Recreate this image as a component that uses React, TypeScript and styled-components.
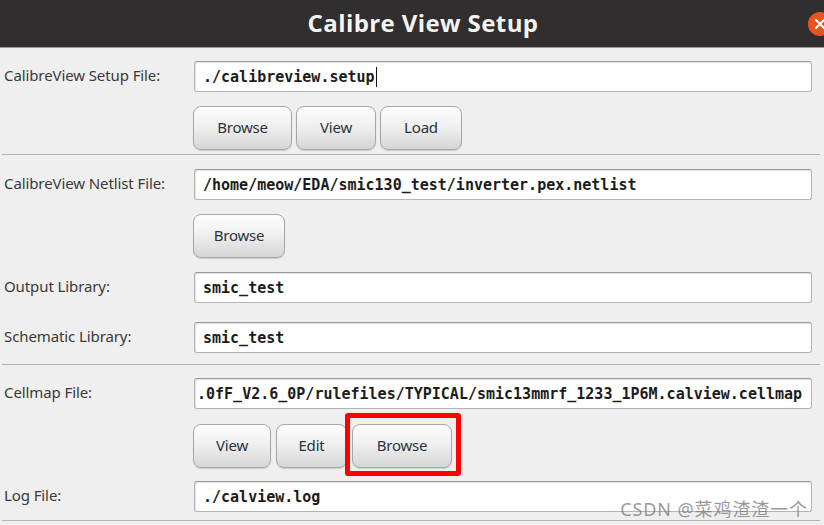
import React from 'react';
import styled, { createGlobalStyle } from 'styled-components';

const GlobalStyle = createGlobalStyle`
  html, body {
    margin: 0;
    padding: 0;
    background: #efefef;
    overflow: hidden;
  }
`;

const App = () => {
  return (
    <Window>
      <GlobalStyle />
      <TitleBar>
        <Title>Calibre View Setup</Title>
        <CloseButton>
          <svg width="24" height="24" viewBox="0 0 24 24">
            <path d="M8 8 L16 16 M16 8 L8 16" stroke="#fff" strokeWidth="2" strokeLinecap="round" />
          </svg>
        </CloseButton>
      </TitleBar>

      <Section $top={13} $bottom={4}>
        <Row>
          <Label>CalibreView Setup File:</Label>
          <Field>
            ./calibreview.setup
            <Caret />
          </Field>
        </Row>
        <Buttons $top={14}>
          <Button $width={99}>Browse</Button>
          <Button $width={80}>View</Button>
          <Button $width={82}>Load</Button>
        </Buttons>
      </Section>

      <Section $top={14} $bottom={11} $line>
        <Row>
          <Label>CalibreView Netlist File:</Label>
          <Field>/home/meow/EDA/smic130_test/inverter.pex.netlist</Field>
        </Row>
        <Buttons $top={14}>
          <Button $width={92}>Browse</Button>
        </Buttons>
        <Row $top={14}>
          <Label>Output Library:</Label>
          <Field>smic_test</Field>
        </Row>
        <Row $top={19}>
          <Label>Schematic Library:</Label>
          <Field>smic_test</Field>
        </Row>
      </Section>

      <Section $top={13} $bottom={8} $line>
        <Row>
          <Label>Cellmap File:</Label>
          <Field $scrolled>.0fF_V2.6_0P/rulefiles/TYPICAL/smic13mmrf_1233_1P6M.calview.cellmap</Field>
        </Row>
        <Buttons $top={15} $gap={5}>
          <Button $width={78}>View</Button>
          <Button $width={71}>Edit</Button>
          <Button $width={100} $marked>Browse</Button>
        </Buttons>
        <Row $top={13}>
          <Label>Log File:</Label>
          <Field>./calview.log</Field>
        </Row>
      </Section>
      <Divider />

      <Watermark>CSDN @菜鸡渣渣一个</Watermark>
    </Window>
  );
};

export default App;

const Window = styled.div`
  position: relative;
  width: 824px;
  height: 525px;
  background: #efefef;
  overflow: hidden;
`;

const TitleBar = styled.div`
  position: relative;
  height: 47px;
  background: #302e2e;
  border-bottom: 1px solid #9c9a98;
  display: flex;
  align-items: center;
  justify-content: center;
  padding-left: 22px;
`;

const Title = styled.div`
  font-family: 'Open Sans', 'Noto Sans', sans-serif;
  font-weight: 700;
  font-size: 24px;
  letter-spacing: 0.4px;
  color: #f4f4f4;
  margin-top: -3px;
`;

const CloseButton = styled.div`
  position: absolute;
  right: -8px;
  top: 12px;
  width: 24px;
  height: 24px;
  border-radius: 50%;
  background: #e95420;
  svg {
    display: block;
  }
`;

const Section = styled.div<{ $top: number; $bottom: number; $line?: boolean }>`
  padding: ${(p) => p.$top}px 0 ${(p) => p.$bottom}px;
  border-top: ${(p) => (p.$line ? '1px solid #b2b2b2' : 'none')};
  margin: 0 4px 0 2px;
`;

const Divider = styled.div`
  height: 1px;
  background: #b2b2b2;
  margin: 0 4px 0 2px;
`;

const Row = styled.div<{ $top?: number }>`
  display: grid;
  grid-template-columns: 192px 618px;
  align-items: center;
  margin-top: ${(p) => p.$top || 0}px;
`;

const Label = styled.div`
  font-family: 'Noto Sans', 'Open Sans', sans-serif;
  font-size: 15px;
  letter-spacing: -0.1px;
  color: #3a3a3a;
  padding-left: 2px;
  margin-top: -3px;
`;

const Field = styled.div<{ $scrolled?: boolean }>`
  height: 31px;
  box-sizing: border-box;
  display: flex;
  align-items: center;
  padding-left: ${(p) => (p.$scrolled ? 2 : 8)}px;
  background: #fff;
  border: 1px solid #b4b4b4;
  border-top-color: #9a9a9a;
  border-radius: 3px;
  box-shadow: inset 1px 1px 1px rgba(0, 0, 0, 0.12);
  font-family: 'DejaVu Sans Mono', monospace;
  font-weight: 700;
  font-size: 15px;
  color: #1c1c1c;
  white-space: nowrap;
  overflow: hidden;
`;

const Caret = styled.span`
  display: inline-block;
  width: 1px;
  height: 20px;
  background: #111;
  margin-left: 1px;
`;

const Buttons = styled.div<{ $top: number; $gap?: number }>`
  display: flex;
  gap: ${(p) => p.$gap || 4}px;
  margin-top: ${(p) => p.$top}px;
  padding-left: 191px;
`;

const Button = styled.button<{ $width: number; $marked?: boolean }>`
  position: relative;
  width: ${(p) => p.$width}px;
  height: 44px;
  border: 1px solid #a8a8a8;
  border-radius: 8px;
  background: linear-gradient(#fdfdfd 0%, #f0f0f0 45%, #d6d6d6 100%);
  box-shadow: 0 1px 1px rgba(0, 0, 0, 0.15);
  font-family: 'Noto Sans', 'Open Sans', sans-serif;
  font-size: 15px;
  letter-spacing: -0.2px;
  color: #2a3440;
  padding: 0 0 2px;
  &::after {
    content: '';
    display: ${(p) => (p.$marked ? 'block' : 'none')};
    position: absolute;
    left: -8px;
    right: -10px;
    top: -12px;
    bottom: -9px;
    border: 5px solid #f00;
    border-radius: 3px;
  }
`;

const Watermark = styled.div`
  position: absolute;
  right: 16px;
  bottom: 4px;
  font-family: 'Noto Sans', 'Noto Sans CJK SC', sans-serif;
  font-size: 18px;
  letter-spacing: 0.9px;
  color: rgba(120, 120, 120, 0.75);
`;
